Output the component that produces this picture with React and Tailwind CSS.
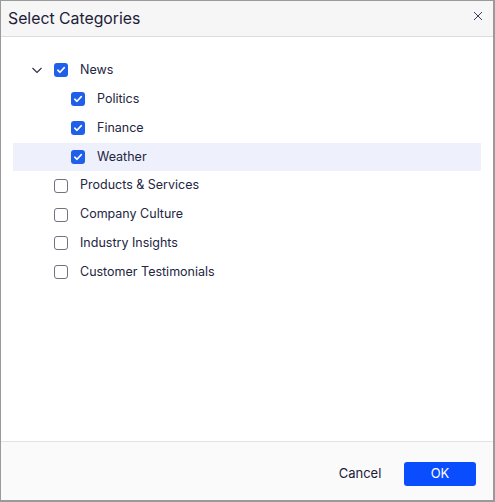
import { useState } from "react";

const tree = [
  {
    id: "news",
    label: "News",
    children: [
      { id: "politics", label: "Politics" },
      { id: "finance", label: "Finance" },
      { id: "weather", label: "Weather" },
    ],
  },
  { id: "products", label: "Products & Services" },
  { id: "culture", label: "Company Culture" },
  { id: "insights", label: "Industry Insights" },
  { id: "testimonials", label: "Customer Testimonials" },
];

function Check({ checked, onClick }) {
  return (
    <button
      onClick={onClick}
      className={
        checked
          ? "flex h-[14px] w-[14px] shrink-0 items-center justify-center rounded-[3px] bg-[#1f5fea]"
          : "h-[14px] w-[14px] shrink-0 rounded-[3px] border border-[#6f7280] bg-white"
      }
    >
      {checked && (
        <svg width="10" height="10" viewBox="0 0 10 10" fill="none">
          <path d="M1.8 5.2 4 7.3 8.3 2.6" stroke="white" strokeWidth="1.6" strokeLinecap="round" strokeLinejoin="round" />
        </svg>
      )}
    </button>
  );
}

function Row({ item, depth, checked, toggle, hovered, setHovered, expandable, open, setOpen }) {
  return (
    <div
      onMouseEnter={() => setHovered(item.id)}
      className={`flex h-[28.85px] items-center ${hovered === item.id ? "bg-[#eef0fb]" : ""}`}
    >
      <div className="flex w-[41px] shrink-0 items-center justify-end pr-[4px]">
        {expandable && (
          <button onClick={() => setOpen(!open)} className="mr-[7px] flex h-[12px] w-[12px] items-center justify-center">
            <svg width="12" height="12" viewBox="0 0 12 12" fill="none">
              <path d={open ? "M1.5 4 6 8.5 10.5 4" : "M4 1.5 8.5 6 4 10.5"} stroke="#2a2d45" strokeWidth="1.1" />
            </svg>
          </button>
        )}
      </div>
      <div className={depth ? "ml-[17px] flex items-center" : "flex items-center"}>
        <Check checked={checked[item.id]} onClick={() => toggle(item)} />
        <span className="ml-[12px] text-[12.5px] text-[#222642]">{item.label}</span>
      </div>
    </div>
  );
}

export default function App() {
  const [open, setOpen] = useState(true);
  const [hovered, setHovered] = useState("weather");
  const [checked, setChecked] = useState({ news: true, politics: true, finance: true, weather: true });

  const toggle = (item) => {
    const next = { ...checked, [item.id]: !checked[item.id] };
    if (item.children) item.children.forEach((c) => (next[c.id] = next[item.id]));
    setChecked(next);
  };

  return (
    <div className="flex h-[502px] w-[495px] flex-col border-b-2 border-l border-r-2 border-t border-[#9a9a9a] bg-white font-['Inter',sans-serif]">
      <div className="flex h-[36px] shrink-0 items-center justify-between border-b border-[#dcdcdc] bg-[#f6f6f6] pl-[7px] pr-[10px]">
        <h1 className="text-[15.8px] text-[#1c2038]">Select Categories</h1>
        <button className="mb-[6px]">
          <svg width="10" height="10" viewBox="0 0 10 10" fill="none">
            <path d="M1 1 9 9M9 1 1 9" stroke="#3a3d55" strokeWidth="1" />
          </svg>
        </button>
      </div>

      <div className="flex-1 px-[12px] pt-[19px]">
        {tree.map((item) => (
          <div key={item.id}>
            <Row
              item={item}
              depth={0}
              checked={checked}
              toggle={toggle}
              hovered={hovered}
              setHovered={setHovered}
              expandable={!!item.children}
              open={open}
              setOpen={setOpen}
            />
            {item.children && open &&
              item.children.map((c) => (
                <Row key={c.id} item={c} depth={1} checked={checked} toggle={toggle} hovered={hovered} setHovered={setHovered} />
              ))}
          </div>
        ))}
      </div>

      <div className="flex h-[59px] shrink-0 items-center justify-end gap-[8px] border-t border-[#e2e2e2] bg-[#fafafa] pr-[17px] pt-[5px]">
        <button className="h-[24px] w-[72px] text-[13px] text-[#1c2038]">Cancel</button>
        <button className="h-[24px] w-[72px] rounded-[3px] bg-[#0a4dff] text-[13px] text-white">OK</button>
      </div>
    </div>
  );
}
